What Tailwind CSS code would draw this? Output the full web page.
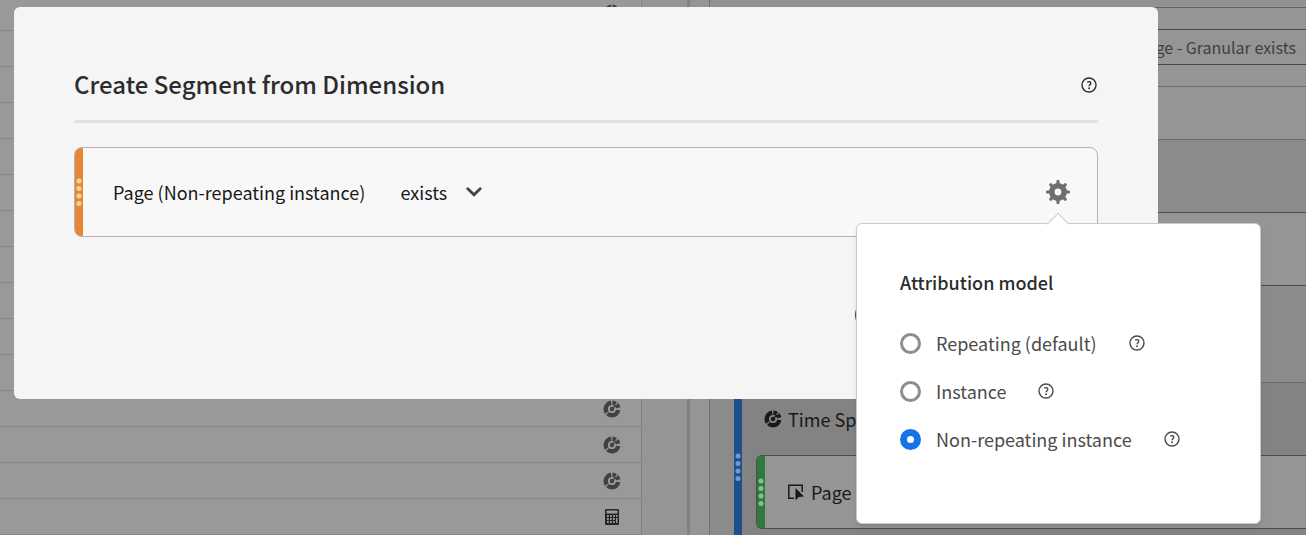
<!DOCTYPE html>
<html lang="en">
<head>
  <meta charset="UTF-8" />
  <meta name="viewport" content="width=device-width, initial-scale=1.0" />
  <title>Create Segment from Dimension</title>
  <script src="https://cdn.jsdelivr.net/npm/@tailwindcss/browser@4"></script>
</head>
<body class="font-['Noto_Sans_CJK_SC','Noto_Sans',sans-serif] bg-[#959595] text-[#191919]">
  <!-- Shared icons -->
  <svg class="hidden" aria-hidden="true">
    <symbol id="icon-dimension" viewBox="0 0 18 18">
      <circle cx="9" cy="9" r="6.300" fill="none" stroke="currentColor" stroke-width="4.400" pathLength="360" stroke-dasharray="125 10 117 12 32 10 32 22" stroke-dashoffset="-10" />
      <circle cx="9" cy="9" r="2.200" fill="currentColor" />
      <path d="M10 8l3-3" stroke="currentColor" stroke-width="1.200" />
    </symbol>
    <symbol id="icon-help" viewBox="0 0 16 16">
      <circle cx="8" cy="8" r="7" fill="none" stroke="currentColor" stroke-width="1.400" />
      <path d="M6.200 5.200c1.500-1 3.600-.6 3.600 1 0 1.400-1.700 1.600-1.700 3.100" fill="none" stroke="currentColor" stroke-width="1.400" />
      <circle cx="8.100" cy="11.300" r=".95" fill="currentColor" />
    </symbol>
    <symbol id="icon-dots" viewBox="0 0 6 28">
      <circle cx="3" cy="3" r="2.500" fill="currentColor" />
      <circle cx="3" cy="10.500" r="2.500" fill="currentColor" />
      <circle cx="3" cy="18" r="2.500" fill="currentColor" />
      <circle cx="3" cy="25.500" r="2.500" fill="currentColor" />
    </symbol>
  </svg>

  <div class="relative h-screen overflow-hidden">
    <!-- Workspace behind the dialog -->
    <main class="flex h-full">
      <ul class="w-[642px] shrink-0 border-r border-[#828282] bg-[#999] text-[#414141]">
        <li class="flex h-[31px] items-center justify-end border-b border-[#868686] pr-5 pb-1"><svg class="size-[18px]"><use href="#icon-dimension" /></svg></li>
        <li class="h-9 border-b border-[#868686]"></li>
        <li class="h-9 border-b border-[#868686]"></li>
        <li class="h-9 border-b border-[#868686]"></li>
        <li class="h-9 border-b border-[#868686]"></li>
        <li class="h-9 border-b border-[#868686]"></li>
        <li class="h-9 border-b border-[#868686]"></li>
        <li class="h-9 border-b border-[#868686]"></li>
        <li class="h-9 border-b border-[#868686]"></li>
        <li class="h-9 border-b border-[#868686]"></li>
        <li class="h-9 border-b border-[#868686]"></li>
        <li class="flex h-9 items-center justify-end border-b border-[#868686] pr-5"><svg class="size-[18px]"><use href="#icon-dimension" /></svg></li>
        <li class="flex h-9 items-center justify-end border-b border-[#868686] pr-5"><svg class="size-[18px]"><use href="#icon-dimension" /></svg></li>
        <li class="flex h-9 items-center justify-end border-b border-[#868686] pr-5"><svg class="size-[18px]"><use href="#icon-dimension" /></svg></li>
        <li class="flex h-9 items-center justify-end border-b border-[#868686] pr-5 text-[#262626]">
          <svg class="size-[18px]" viewBox="0 0 18 18">
            <path fill="currentColor" fill-rule="evenodd" d="M3 1h12a1 1 0 0 1 1 1v14a1 1 0 0 1-1 1H3a1 1 0 0 1-1-1V2a1 1 0 0 1 1-1zM3.500 2.500v3h11v-3zM4 7v2h1.800V7zM7 7v2h1.800V7zM10 7v2h1.800V7zM13 7v2h1.500V7zM4 10v2h1.800v-2zM7 10v2h1.800v-2zM10 10v2h1.800v-2zM4 13v2h1.800v-2zM7 13v2h1.800v-2zM10 13v2h1.800v-2zM13 10v5h1.500v-5z" />
          </svg>
        </li>
      </ul>
      <div class="w-[45px] shrink-0 bg-[#959595]"></div>
      <div class="w-[3px] shrink-0 bg-[#808080]"></div>
      <div class="w-5 shrink-0 border-r border-[#707070] bg-[#959595]"></div>

      <section class="flex min-w-0 grow flex-col bg-[#8b8b8b]">
        <div class="h-[8px] shrink-0 border-b border-[#636363] bg-[#929292]"></div>
        <div class="flex h-[79px] shrink-0 items-center border-b border-[#6c6c6c] bg-[#959595]">
          <div class="flex h-9 grow items-center justify-end border-y border-[#474747] pr-[10px] text-base text-[#3f3f3f]">Page - Granular exists</div>
        </div>
        <div class="h-[53px] shrink-0 border-b border-[#6c6c6c] bg-[#959595]"></div>
        <div class="h-[73px] shrink-0 border-b border-[#4c4c4c]"></div>
        <div class="h-[73px] shrink-0 border-b border-[#4c4c4c] bg-[#959595]"></div>
        <div class="h-24 shrink-0"></div>
        <div class="ml-6 flex grow border-t border-[#6c6c6c] bg-[#838383]">
          <div class="flex w-2 shrink-0 justify-center bg-[#1c4f8c] pt-[70px] text-[#6f9bce]">
            <svg class="h-7 w-[6px]"><use href="#icon-dots" /></svg>
          </div>
          <div class="grow pl-[14px]">
            <div class="flex h-[72px] items-center gap-[6px] pl-2 text-lg">
              <svg class="size-[18px]"><use href="#icon-dimension" /></svg>
              <span>Time Spent</span>
            </div>
            <div class="flex h-[74px] overflow-hidden rounded-l-md border border-r-0 border-[#4c4c4c] bg-[#959595]">
              <div class="flex w-2 shrink-0 items-center justify-center bg-[#2e7940] text-[#8abf92]">
                <svg class="h-7 w-[6px]"><use href="#icon-dots" /></svg>
              </div>
              <div class="flex items-center gap-[6px] pl-[22px] text-lg">
                <svg class="size-[18px]" viewBox="0 0 18 18" fill="none">
                  <path d="M7 15.200H1.800V2.200h13.400V9" stroke="currentColor" stroke-width="1.500" />
                  <path d="M8.500 5v12.500l3.200-3.400 5.300-.6z" fill="currentColor" />
                </svg>
                <span>Page</span>
              </div>
            </div>
          </div>
        </div>
      </section>
    </main>

    <!-- Dialog -->
    <div class="absolute inset-0 pt-[7px] pr-[148px] pl-[14px]">
      <div role="dialog" aria-labelledby="dialog-title" class="rounded-md bg-[#f5f5f5] px-[60px] pt-[60px] pb-[68px]">
        <header class="flex h-14 items-start justify-between border-b-[3px] border-[#e1e1e1]">
          <h1 id="dialog-title" class="text-2xl leading-[34px] font-medium text-[#2c2c2c]">Create Segment from Dimension</h1>
          <button type="button" aria-label="Help" class="flex h-9 items-center text-[#2c2c2c]"><svg class="mr-px size-4"><use href="#icon-help" /></svg></button>
        </header>

        <div class="mt-6 flex h-[90px] rounded-lg border border-[#b3b3b3] bg-[#f8f8f8]">
          <div class="flex w-2 shrink-0 items-center justify-center rounded-l-md bg-[#e68735] text-[#fbcf9f]">
            <svg class="h-7 w-[6px]"><use href="#icon-dots" /></svg>
          </div>
          <div class="flex grow items-center pr-[27px] pl-[30px] text-lg">
            <label for="operator">Page (Non-repeating instance)</label>
            <div class="relative ml-[35px]">
              <select id="operator" class="w-[82px] appearance-none bg-transparent">
                <option>exists</option>
              </select>
              <svg class="pointer-events-none absolute inset-y-0 right-0 my-auto h-[10px] w-4 text-[#444]" viewBox="0 0 16 10" fill="none">
                <path d="M1.800 1.700L8 7.800l6.200-6.100" stroke="currentColor" stroke-width="2.800" stroke-linecap="round" />
              </svg>
            </div>

            <div class="relative ml-auto">
              <button type="button" aria-label="Attribution settings" class="block text-[#6e6e6e]">
                <svg class="size-6" viewBox="0 0 24 24">
                  <circle cx="12" cy="12" r="6.200" fill="none" stroke="currentColor" stroke-width="5.600" />
                  <path d="M12 1.500V5M12 19v3.500M1.500 12H5M19 12h3.500M4.800 4.800l2.200 2.200M17 17l2.200 2.200M4.800 19.200L7 17M17 7l2.200-2.200" stroke="currentColor" stroke-width="3.200" stroke-linecap="round" />
                </svg>
              </button>

              <!-- Attribution popover -->
              <div class="absolute top-[43px] -right-[191px] z-10 w-[405px] rounded-md border border-[#cacaca] bg-white px-[43px] pt-[43px] pb-[60px] shadow-md">
                <div class="absolute -top-[8px] right-[194px] size-4 rotate-45 border-t border-l border-[#cacaca] bg-white"></div>
                <h2 class="leading-[30px] font-medium text-[#2c2c2c]">Attribution model</h2>
                <div class="mt-[22px] flex flex-col text-[#4b4b4b]">
                  <div class="flex h-12 items-center">
                    <input type="radio" name="model" id="repeating" class="size-[21px] appearance-none rounded-full border-[3px] border-[#8e8e8e] bg-white checked:border-[7px] checked:border-[#1473e6]" />
                    <label for="repeating" class="ml-[15px]">Repeating (default)</label>
                    <button type="button" aria-label="About repeating" class="ml-8"><svg class="size-4"><use href="#icon-help" /></svg></button>
                  </div>
                  <div class="flex h-12 items-center">
                    <input type="radio" name="model" id="instance" class="size-[21px] appearance-none rounded-full border-[3px] border-[#8e8e8e] bg-white checked:border-[7px] checked:border-[#1473e6]" />
                    <label for="instance" class="ml-[15px]">Instance</label>
                    <button type="button" aria-label="About instance" class="ml-8"><svg class="size-4"><use href="#icon-help" /></svg></button>
                  </div>
                  <div class="flex h-12 items-center">
                    <input type="radio" name="model" id="non-repeating" checked class="size-[21px] appearance-none rounded-full border-[3px] border-[#8e8e8e] bg-white checked:border-[7px] checked:border-[#1473e6]" />
                    <label for="non-repeating" class="ml-[15px]">Non-repeating instance</label>
                    <button type="button" aria-label="About non-repeating" class="ml-8"><svg class="size-4"><use href="#icon-help" /></svg></button>
                  </div>
                </div>
              </div>
            </div>
          </div>
        </div>

        <footer class="mt-[62px] flex justify-end gap-4">
          <button type="button" class="h-8 w-[103px] rounded-full border-2 border-[#4b4b4b] text-base">Cancel</button>
          <button type="button" class="h-8 w-[124px] rounded-full bg-[#1473e6] text-base text-white">Apply</button>
        </footer>
      </div>
    </div>
  </div>
</body>
</html>
